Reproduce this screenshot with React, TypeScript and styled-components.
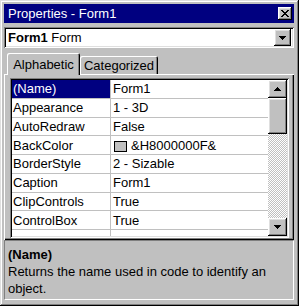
import React, { ReactElement } from 'react';
import styled, { createGlobalStyle, css } from 'styled-components';

const GlobalStyle = createGlobalStyle`
    html, body {
        margin: 0;
        padding: 0;
        background: #c0c0c0;
    }
    body {
        font-family: "Liberation Sans", Arial, sans-serif;
        font-size: 13px;
        color: #000;
    }
`;

const raised = css`
    box-shadow: inset -1px -1px #000, inset 1px 1px #fff, inset -2px -2px #808080, inset 2px 2px #dfdfdf;
`;

const sunken = css`
    box-shadow: inset 1px 1px #808080, inset -1px -1px #fff, inset 2px 2px #000, inset -2px -2px #dfdfdf;
`;

const Window = styled.div`
    box-sizing: border-box;
    width: 299px;
    height: 306px;
    padding: 4px 5px 6px 4px;
    display: flex;
    flex-direction: column;
    background: #c0c0c0;
    box-shadow: inset -1px -1px #000, inset 1px 1px #dfdfdf, inset -2px -2px #808080, inset 2px 2px #fff;
`;

const TitleBar = styled.div`
    height: 19px;
    flex: none;
    display: flex;
    align-items: center;
    justify-content: space-between;
    padding: 0 2px 0 4px;
    background: #000080;
`;

const Title = styled.span`
    color: #fff;
    line-height: 19px;
`;

const BevelButton = styled.div<{ w: number; h: number }>`
    box-sizing: border-box;
    width: ${(p) => p.w}px;
    height: ${(p) => p.h}px;
    flex: none;
    display: flex;
    align-items: center;
    justify-content: center;
    background: #c0c0c0;
    ${raised}
`;

const Combo = styled.div`
    box-sizing: border-box;
    margin-top: 4px;
    height: 21px;
    flex: none;
    display: flex;
    align-items: center;
    padding: 2px 3px 2px 2px;
    background: #fff;
    ${sunken}
`;

const ComboText = styled.span`
    flex: 1;
    padding-left: 2px;
    line-height: 17px;
`;

const Tabs = styled.div`
    margin-top: 5px;
    height: 21px;
    flex: none;
    display: flex;
    align-items: flex-end;
    padding-left: 3px;
`;

const Tab = styled.div<{ active?: boolean; w: number }>`
    box-sizing: border-box;
    width: ${(p) => p.w}px;
    height: ${(p) => (p.active ? 22 : 18)}px;
    margin-bottom: ${(p) => (p.active ? -1 : 0)}px;
    position: relative;
    z-index: ${(p) => (p.active ? 1 : 0)};
    display: flex;
    align-items: center;
    justify-content: center;
    background: #c0c0c0;
    border-radius: 2px 2px 0 0;
    box-shadow: inset 1px 1px #fff, inset -1px 0 #000, inset -2px 0 #808080;
`;

const TabPanel = styled.div`
    box-sizing: border-box;
    flex: 1;
    min-height: 0;
    display: flex;
    padding: 4px 5px 2px 6px;
    background: #c0c0c0;
    box-shadow: inset 1px 1px #fff, inset -1px -1px #000, inset -2px -2px #808080;
`;

const Grid = styled.div`
    box-sizing: border-box;
    flex: 1;
    display: flex;
    padding: 2px;
    background: #fff;
    ${sunken}
`;

const Rows = styled.div`
    flex: 1;
    overflow: hidden;
    background: #fff;
`;

const Row = styled.div`
    box-sizing: border-box;
    height: 18.75px;
    display: flex;
    border-bottom: 1px solid #c0c0c0;
`;

const NameCell = styled.div<{ selected?: boolean }>`
    width: 99px;
    flex: none;
    display: flex;
    align-items: center;
    padding-left: 1px;
    box-sizing: border-box;
    border-right: 1px solid #c0c0c0;
    white-space: nowrap;
    background: ${(p) => (p.selected ? '#000080' : '#fff')};
    color: ${(p) => (p.selected ? '#fff' : '#000')};
`;

const ValueCell = styled.div`
    flex: 1;
    display: flex;
    align-items: center;
    padding-left: 2px;
    white-space: nowrap;
    overflow: hidden;
`;

const Swatch = styled.span`
    box-sizing: border-box;
    width: 13px;
    height: 11px;
    margin: 2px 4px 0 1px;
    background: #c0c0c0;
    border: 1px solid #000;
`;

const ScrollBar = styled.div`
    width: 19px;
    flex: none;
    display: flex;
    flex-direction: column;
    background: repeating-conic-gradient(#c0c0c0 0 25%, #fff 0 50%) 0 0 / 2px 2px;
`;

const Thumb = styled.div`
    height: 36px;
    flex: none;
    background: #c0c0c0;
    ${raised}
`;

const Track = styled.div`
    flex: 1;
`;

const Description = styled.div`
    height: 60px;
    flex: none;
    box-sizing: border-box;
    padding: 5px 3px 0 3px;
    line-height: 17px;
    border-top: 1px solid #808080;
    border-left: 1px solid #808080;
    border-right: 1px solid #fff;
    border-bottom: 1px solid #fff;
`;

const DescTitle = styled.div`
    font-weight: bold;
`;

const Arrow = ({ up }: { up?: boolean }): ReactElement => (
    <svg width="7" height="4" viewBox="0 0 7 4" shapeRendering="crispEdges">
        <path d={up ? 'M3 0h1v1h1v1h1v1h1v1H0V3h1V2h1V1h1z' : 'M0 0h7v1H6v1H5v1H4v1H3V3H2V2H1V1H0z'} fill="#000" />
    </svg>
);

const CloseGlyph = (): ReactElement => (
    <svg width="8" height="7" viewBox="0 0 8 7" shapeRendering="crispEdges">
        <path
            d="M0 0h2v1h1v1h2V1h1V0h2v1H7v1H6v1H5v1h1v1h1v1h1v1H6V6H5V5H3v1H2v1H0V6h1V5h1V4h1V3H2V2H1V1H0z"
            fill="#000"
        />
    </svg>
);

interface IProperty {
    name: string;
    value: string;
    color?: boolean;
}

const properties: IProperty[] = [
    { name: '(Name)', value: 'Form1' },
    { name: 'Appearance', value: '1 - 3D' },
    { name: 'AutoRedraw', value: 'False' },
    { name: 'BackColor', value: '&H8000000F&', color: true },
    { name: 'BorderStyle', value: '2 - Sizable' },
    { name: 'Caption', value: 'Form1' },
    { name: 'ClipControls', value: 'True' },
    { name: 'ControlBox', value: 'True' },
];

const App = (): ReactElement => {
    return (
        <>
            <GlobalStyle />
            <Window>
                <TitleBar>
                    <Title>Properties - Form1</Title>
                    <BevelButton w={14} h={13}>
                        <CloseGlyph />
                    </BevelButton>
                </TitleBar>
                <Combo>
                    <ComboText>
                        <b>Form1</b> Form
                    </ComboText>
                    <BevelButton w={17} h={17}>
                        <Arrow />
                    </BevelButton>
                </Combo>
                <Tabs>
                    <Tab active w={73}>
                        Alphabetic
                    </Tab>
                    <Tab w={78}>Categorized</Tab>
                </Tabs>
                <TabPanel>
                    <Grid>
                        <Rows>
                            {properties.map(
                                (prop: IProperty, i: number): ReactElement => (
                                    <Row key={prop.name}>
                                        <NameCell selected={i === 0}>{prop.name}</NameCell>
                                        <ValueCell>
                                            {prop.color && <Swatch />}
                                            {prop.value}
                                        </ValueCell>
                                    </Row>
                                )
                            )}
                            <Row>
                                <NameCell />
                                <ValueCell />
                            </Row>
                        </Rows>
                        <ScrollBar>
                            <BevelButton w={19} h={18}>
                                <Arrow up />
                            </BevelButton>
                            <Thumb />
                            <Track />
                            <BevelButton w={19} h={18}>
                                <Arrow />
                            </BevelButton>
                        </ScrollBar>
                    </Grid>
                </TabPanel>
                <Description>
                    <DescTitle>(Name)</DescTitle>
                    Returns the name used in code to identify an object.
                </Description>
            </Window>
        </>
    );
};

export default App;
